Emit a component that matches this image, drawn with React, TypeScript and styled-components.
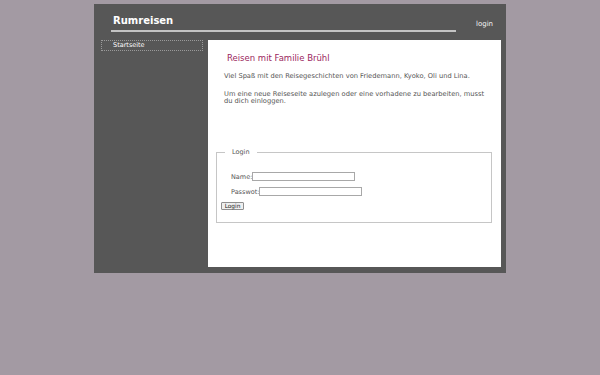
import styled, { createGlobalStyle } from "styled-components";

const GlobalStyle = createGlobalStyle`
  html, body {
    margin: 0;
    padding: 0;
    background: #a39aa3;
    font-family: "DejaVu Sans", Verdana, sans-serif;
  }
`;

const Page = styled.div`
  width: 412px;
  margin: 4px auto 0;
  background: #575757;
  padding-bottom: 6px;
`;

const Header = styled.div`
  display: flex;
  align-items: flex-start;
  padding: 11px 0 0 17px;
  height: 25px;
`;

const Brand = styled.div`
  width: 345px;
`;

const Title = styled.h1`
  margin: 0 0 0 2px;
  font-size: 10px;
  line-height: 12px;
  font-weight: bold;
  color: #ffffff;
`;

const Rule = styled.div`
  height: 2px;
  margin-top: 3px;
  background: #c4c4c4;
`;

const TopLink = styled.a`
  margin: 5px 0 0 20px;
  font-size: 7px;
  line-height: 9px;
  color: #f2f2f2;
  text-decoration: none;
`;

const Body = styled.div`
  display: flex;
  gap: 5px;
  padding: 0 5px 0 7px;
`;

const Sidebar = styled.nav`
  width: 102px;
  flex-shrink: 0;
`;

const NavItem = styled.a`
  display: block;
  box-sizing: border-box;
  height: 11px;
  padding-left: 11px;
  border: 1px dotted #9a9a9a;
  font-size: 6.5px;
  line-height: 9px;
  color: #ffffff;
  text-decoration: none;
`;

const Content = styled.main`
  flex: 1;
  background: #ffffff;
  height: 227px;
  box-sizing: border-box;
  padding: 13px 9px 0 8px;
  color: #555555;
`;

const Heading = styled.h2`
  margin: 0 0 9px 11px;
  font-size: 8.5px;
  line-height: 11px;
  font-weight: normal;
  color: #9b1f5e;
`;

const Text = styled.p`
  margin: 0 0 11px 8px;
  font-size: 6.7px;
  line-height: 7px;
  max-width: 262px;
`;

const LoginBox = styled.fieldset`
  margin: 43px 0 0 0;
  padding: 16px 0 8px 4px;
  border: 1px solid #c6c6c6;
  height: 75px;
  box-sizing: border-box;
`;

const Legend = styled.legend`
  margin-left: 4px;
  padding: 0 7px;
  font-size: 6.5px;
  color: #555555;
`;

const Row = styled.div`
  display: flex;
  align-items: center;
  margin: 0 0 6px 10px;
  font-size: 6.5px;
  color: #555555;
`;

const Field = styled.input`
  width: 103px;
  height: 9px;
  box-sizing: border-box;
  margin: 0;
  padding: 0;
  border: 1px solid #a8a8a8;
  background: #ffffff;
`;

const SubmitButton = styled.button`
  display: block;
  margin-top: 0;
  height: 8px;
  width: 23px;
  padding: 0;
  font-family: inherit;
  font-size: 5.8px;
  line-height: 6px;
  color: #222222;
  background: #efefef;
  border: 1px solid #8f8f8f;
  border-radius: 1px;
`;

export default function App() {
  return (
    <>
      <GlobalStyle />
      <Page>
        <Header>
          <Brand>
            <Title>Rumreisen</Title>
            <Rule />
          </Brand>
          <TopLink href="#">login</TopLink>
        </Header>
        <Body>
          <Sidebar>
            <NavItem href="#">Startseite</NavItem>
          </Sidebar>
          <Content>
            <Heading>Reisen mit Familie Brühl</Heading>
            <Text>Viel Spaß mit den Reisegeschichten von Friedemann, Kyoko, Oli und Lina.</Text>
            <Text>
              Um eine neue Reiseseite azulegen oder eine vorhadene zu bearbeiten, musst du dich einloggen.
            </Text>
            <LoginBox>
              <Legend>Login</Legend>
              <Row>
                Name:<Field type="text" />
              </Row>
              <Row>
                Passwot:<Field type="password" />
              </Row>
              <SubmitButton>Login</SubmitButton>
            </LoginBox>
          </Content>
        </Body>
      </Page>
    </>
  );
}
